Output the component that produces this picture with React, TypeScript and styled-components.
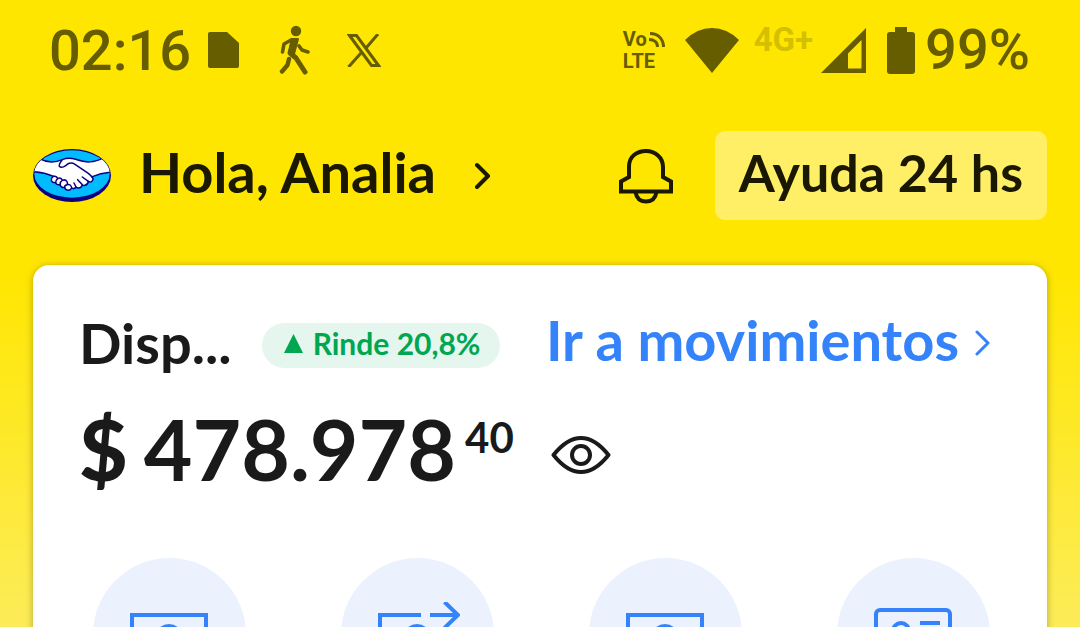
import React from "react";
import styled, { createGlobalStyle } from "styled-components";

const GlobalStyle = createGlobalStyle`
  *, *::before, *::after { box-sizing: border-box; }
  body { margin: 0; background: #ffe600; }
  button { border: 0; padding: 0; background: none; color: inherit; font: inherit; cursor: pointer; }
  a { color: inherit; text-decoration: none; }
  svg { display: block; flex: none; }
`;

const Screen = styled.div`
  height: 100vh;
  overflow: hidden;
  display: flex;
  flex-direction: column;
  background: linear-gradient(#ffe600 0, #ffe600 270px, #fcec5c 640px);
  color: #1a1a1a;
  font-family: Lato, "Open Sans", sans-serif;
  font-weight: 700;
`;

const StatusBar = styled.div`
  flex: none;
  display: flex;
  align-items: center;
  justify-content: space-between;
  height: 100px;
  padding: 0 50px 0 49px;
  color: #665c00;
  font-family: Roboto, sans-serif;
  font-weight: 500;
`;

const StatusGroup = styled.div`
  display: flex;
  align-items: center;
`;

const StatusText = styled.span`
  padding-top: 2px;
  font-size: 56px;
  line-height: 64px;
`;

const StatusIcon = styled.span<{ $before: number }>`
  margin-left: ${(p) => p.$before}px;
`;

const Volte = styled.span`
  display: flex;
  flex-direction: column;
  font-size: 20px;
  font-weight: 700;
  line-height: 22px;
`;

const VolteTop = styled.span`
  display: flex;
  align-items: center;
  gap: 2px;
`;

const NetworkType = styled.span`
  align-self: flex-start;
  margin: 0 8px 0 15px;
  color: #d4bf00;
  font-size: 33px;
  font-weight: 700;
  line-height: 44px;
`;

const Header = styled.header`
  flex: none;
  display: flex;
  align-items: center;
  margin-top: 31px;
  padding: 0 33px;
`;

const Profile = styled.button`
  display: flex;
  align-items: center;
  color: #1a1800;
`;

const Greeting = styled.span`
  margin: 0 39px 0 28px;
  padding-bottom: 8px;
  font-size: 56px;
  line-height: 64px;
`;

const HeaderActions = styled.div`
  display: flex;
  align-items: center;
  gap: 41px;
  margin-left: auto;
  color: #1a1800;
`;

const HelpButton = styled.button`
  height: 89px;
  padding: 0 24px 8px;
  border-radius: 10px;
  background: #ffef66;
  font-size: 52px;
  line-height: 64px;
`;

const Card = styled.main`
  flex: none;
  margin: 45px 33px 0;
  border-radius: 16px;
  background: #fff;
  box-shadow: 0 1px 7px rgba(70, 62, 0, 0.4);
`;

const Summary = styled.section`
  padding: 46px 46px 0;
`;

const SummaryRow = styled.div`
  display: flex;
  align-items: center;
  height: 64px;
`;

const Title = styled.h1`
  margin: 0;
  font-size: 56px;
  font-weight: 700;
  line-height: 64px;
`;

const YieldBadge = styled.span`
  display: flex;
  align-items: center;
  gap: 10px;
  height: 45px;
  margin: 4px 0 0 30px;
  padding: 0 20px 4px 22px;
  border-radius: 23px;
  background: #e5f6ee;
  color: #00a650;
  font-size: 30px;
  line-height: 40px;
`;

const MovementsLink = styled.a`
  display: flex;
  align-items: center;
  gap: 16px;
  margin: 0 10px 0 auto;
  color: #3483fa;
  font-size: 56px;
  line-height: 64px;
`;

const MovementsLabel = styled.span`
  padding-bottom: 6px;
`;

const Balance = styled.div`
  display: flex;
  margin-top: 24px;
  font-size: 84px;
  line-height: 100px;
`;

const Currency = styled.span`
  margin-right: 16px;
  font-weight: 900;
`;

const Cents = styled.span`
  margin-left: 9px;
  font-size: 42px;
  line-height: 76px;
`;

const EyeButton = styled.button`
  align-self: center;
  margin: 12px 0 0 37px;
`;

const Actions = styled.nav`
  display: grid;
  grid-template-columns: repeat(4, 1fr);
  justify-items: center;
  margin-top: 59px;
  padding: 0 10px 60px 12px;
`;

const Action = styled.button`
  display: grid;
  place-items: center;
  width: 153px;
  height: 153px;
  border-radius: 50%;
  background: #ebf2fd;
  color: #3483fa;
`;

const FileIcon = () => (
  <svg width="31" height="36" viewBox="0 0 31 36" fill="currentColor">
    <path d="M2 0H19L31 11V34Q31 36 29 36H2Q0 36 0 34V2Q0 0 2 0Z" />
  </svg>
);

const WalkIcon = () => (
  <svg width="32" height="50" viewBox="0 0 32 50" fill="none" stroke="currentColor" strokeLinecap="round" strokeLinejoin="round">
    <circle cx="17" cy="6" r="5.2" fill="currentColor" stroke="none" />
    <path d="M14 16L11 28L17 33L26 47" strokeWidth="5" />
    <path d="M13 14L19 14L15 29L10 28Z" fill="currentColor" strokeWidth="2" />
    <path d="M12 15L5 19L3.5 27" strokeWidth="3.6" />
    <path d="M20 21L23 25L29 27" strokeWidth="3.6" />
    <path d="M10 34L8.500 40L3 46.500" strokeWidth="4.400" />
  </svg>
);

const XIcon = () => (
  <svg width="34" height="33" viewBox="0 0 34 33" fill="none" stroke="currentColor" strokeWidth="3">
    <path d="M2.500 1.500H9.500L31.500 31.500H24.500Z" />
    <path d="M31 0L19 14M14 19L1.500 33" />
  </svg>
);

const WavesIcon = () => (
  <svg width="17" height="17" viewBox="0 0 17 17" fill="none" stroke="currentColor" strokeWidth="3">
    <path d="M1 2.500C9 2.500 14.500 8 14.500 16M0 8.500C5 8.500 8.500 11 8.500 16" />
  </svg>
);

const WifiIcon = () => (
  <svg width="54" height="45" viewBox="0 0 54 45" fill="currentColor">
    <path d="M27 45L0 12Q12 0 27 0T54 12Z" />
  </svg>
);

const SignalIcon = () => (
  <svg width="45" height="45" viewBox="0 0 45 45" fill="currentColor" fillRule="evenodd">
    <path d="M45 0V45H0ZM40.500 12L27 25.500V40.500H40.500Z" />
  </svg>
);

const BatteryIcon = () => (
  <svg width="28" height="47" viewBox="0 0 28 47" fill="currentColor">
    <path d="M8 0H20V5H25Q28 5 28 8V44Q28 47 25 47H3Q0 47 0 44V8Q0 5 3 5H8Z" />
  </svg>
);

const HandshakeLogo = () => (
  <svg width="78" height="53" viewBox="39 53 234 159">
    <defs>
      <clipPath id="oval">
        <ellipse cx="156" cy="128" rx="114" ry="71" />
      </clipPath>
    </defs>
    <ellipse cx="156" cy="132.500" rx="117" ry="79.500" fill="#0a0080" />
    <ellipse cx="156" cy="128" rx="113" ry="71" fill="#00bcff" />
    <g clipPath="url(#oval)" stroke="#0a0080" strokeWidth="4.500" strokeLinejoin="round" strokeLinecap="round">
      <path
        d="M36 70L58 82C82 95 103 95 127 85C139 80 153 80 167 84C198 94 220 96 252 79L278 68V122Q245 124 217 136Q222 147 214 151Q208 153 205 150Q204 160 195 162Q190 163 187 160Q185 170 175 170Q170 170 168 167Q162 175 155 170Q151 178 142 176Q134 174 134 168Q124 171 120 160Q109 162 107 154Q94 154 94 145Q94 138 101 135Q72 123 36 121Z"
        fill="#fff"
      />
      <path d="M127 85Q116 98 118 105C124 112 137 105 143 98Q154 92 165 99L205 126Q213 132 217 139" fill="#fff" />
      <path d="M101 135Q110 133 113 142Q122 137 127 147Q136 143 141 151Q144 155 141 160Q153 157 155 170M107 154Q107 147 113 142M120 160Q120 151 127 147M134 168Q133 162 141 160" fill="none" />
      <path d="M187 137L205 150M173 145L187 160M162 155L168 167" fill="none" />
    </g>
  </svg>
);

const Chevron = ({ width }: { width: number }) => (
  <svg width="16" height="28" viewBox="0 0 16 28" fill="none" stroke="currentColor" strokeWidth={width} strokeLinecap="round" strokeLinejoin="round">
    <path d="M2 3L13 14L2 25" />
  </svg>
);

const BellIcon = () => (
  <svg width="56" height="56" viewBox="0 0 56 56" fill="none" stroke="currentColor" strokeWidth="4">
    <path d="M3 43.500V33.500L11 29V19Q11 11 16 7T28 3Q35 3 40 7.500T45 19V29L53 33.500V43.500Z" />
    <path d="M17.500 44Q19 53.500 28 53.500T38.500 44" />
  </svg>
);

const EyeIcon = () => (
  <svg width="60" height="40" viewBox="0 0 60 40" fill="none" stroke="currentColor" strokeWidth="4" strokeLinejoin="round">
    <path d="M2.500 20Q16 3 30 3T57.500 20Q44 37 30 37T2.500 20Z" />
    <circle cx="30" cy="20" r="9" />
  </svg>
);

const ActionIcon = ({ children }: { children: React.ReactNode }) => (
  <svg width="86" height="66" viewBox="0 0 86 66" fill="none" stroke="currentColor" strokeWidth="4">
    {children}
  </svg>
);

const BanknoteIcon = () => (
  <ActionIcon>
    <path d="M6 13H80V59H6Z" />
    <circle cx="43" cy="36" r="12" />
  </ActionIcon>
);

const TransferIcon = () => (
  <ActionIcon>
    <path d="M47 13H6V59H80V32" />
    <circle cx="43" cy="36" r="12" />
    <path d="M56 13H84M70.500 0L84 13L70.500 26" />
  </ActionIcon>
);

const IdCardIcon = () => (
  <ActionIcon>
    <rect x="6" y="8" width="74" height="53" rx="4" />
    <circle cx="31" cy="29" r="8" />
    <path d="M50 21H70M50 33H70M17 50Q18 40 31 40T45 50" />
  </ActionIcon>
);

const actions = [
  { label: "Ingresar", Icon: BanknoteIcon },
  { label: "Transferir", Icon: TransferIcon },
  { label: "Retirar", Icon: BanknoteIcon },
  { label: "Tu CVU", Icon: IdCardIcon },
];

export default function App() {
  return (
    <Screen>
      <GlobalStyle />
      <StatusBar>
        <StatusGroup>
          <StatusText>02:16</StatusText>
          <StatusIcon $before={17}><FileIcon /></StatusIcon>
          <StatusIcon $before={40}><WalkIcon /></StatusIcon>
          <StatusIcon $before={36}><XIcon /></StatusIcon>
        </StatusGroup>
        <StatusGroup>
          <Volte>
            <VolteTop>
              Vo
              <WavesIcon />
            </VolteTop>
            <span>LTE</span>
          </Volte>
          <StatusIcon $before={19}><WifiIcon /></StatusIcon>
          <NetworkType>4G+</NetworkType>
          <StatusIcon $before={0}><SignalIcon /></StatusIcon>
          <StatusIcon $before={21}><BatteryIcon /></StatusIcon>
          <StatusIcon $before={10}><StatusText>99%</StatusText></StatusIcon>
        </StatusGroup>
      </StatusBar>
      <Header>
        <Profile>
          <HandshakeLogo />
          <Greeting>Hola, Analia</Greeting>
          <Chevron width={4} />
        </Profile>
        <HeaderActions>
          <button aria-label="Notificaciones"><BellIcon /></button>
          <HelpButton>Ayuda 24 hs</HelpButton>
        </HeaderActions>
      </Header>
      <Card>
        <Summary>
          <SummaryRow>
            <Title>Disp...</Title>
            <YieldBadge>
              <svg width="19" height="19" viewBox="0 0 19 19" fill="currentColor">
                <path d="M9.500 0L19 19H0Z" />
              </svg>
              Rinde 20,8%
            </YieldBadge>
            <MovementsLink href="#movimientos">
              <MovementsLabel>Ir a movimientos</MovementsLabel>
              <Chevron width={3} />
            </MovementsLink>
          </SummaryRow>
          <Balance>
            <Currency>$</Currency>
            <span>478.978</span>
            <Cents>40</Cents>
            <EyeButton aria-label="Ocultar saldo"><EyeIcon /></EyeButton>
          </Balance>
        </Summary>
        <Actions>
          {actions.map(({ label, Icon }) => (
            <Action key={label} aria-label={label}>
              <Icon />
            </Action>
          ))}
        </Actions>
      </Card>
    </Screen>
  );
}
